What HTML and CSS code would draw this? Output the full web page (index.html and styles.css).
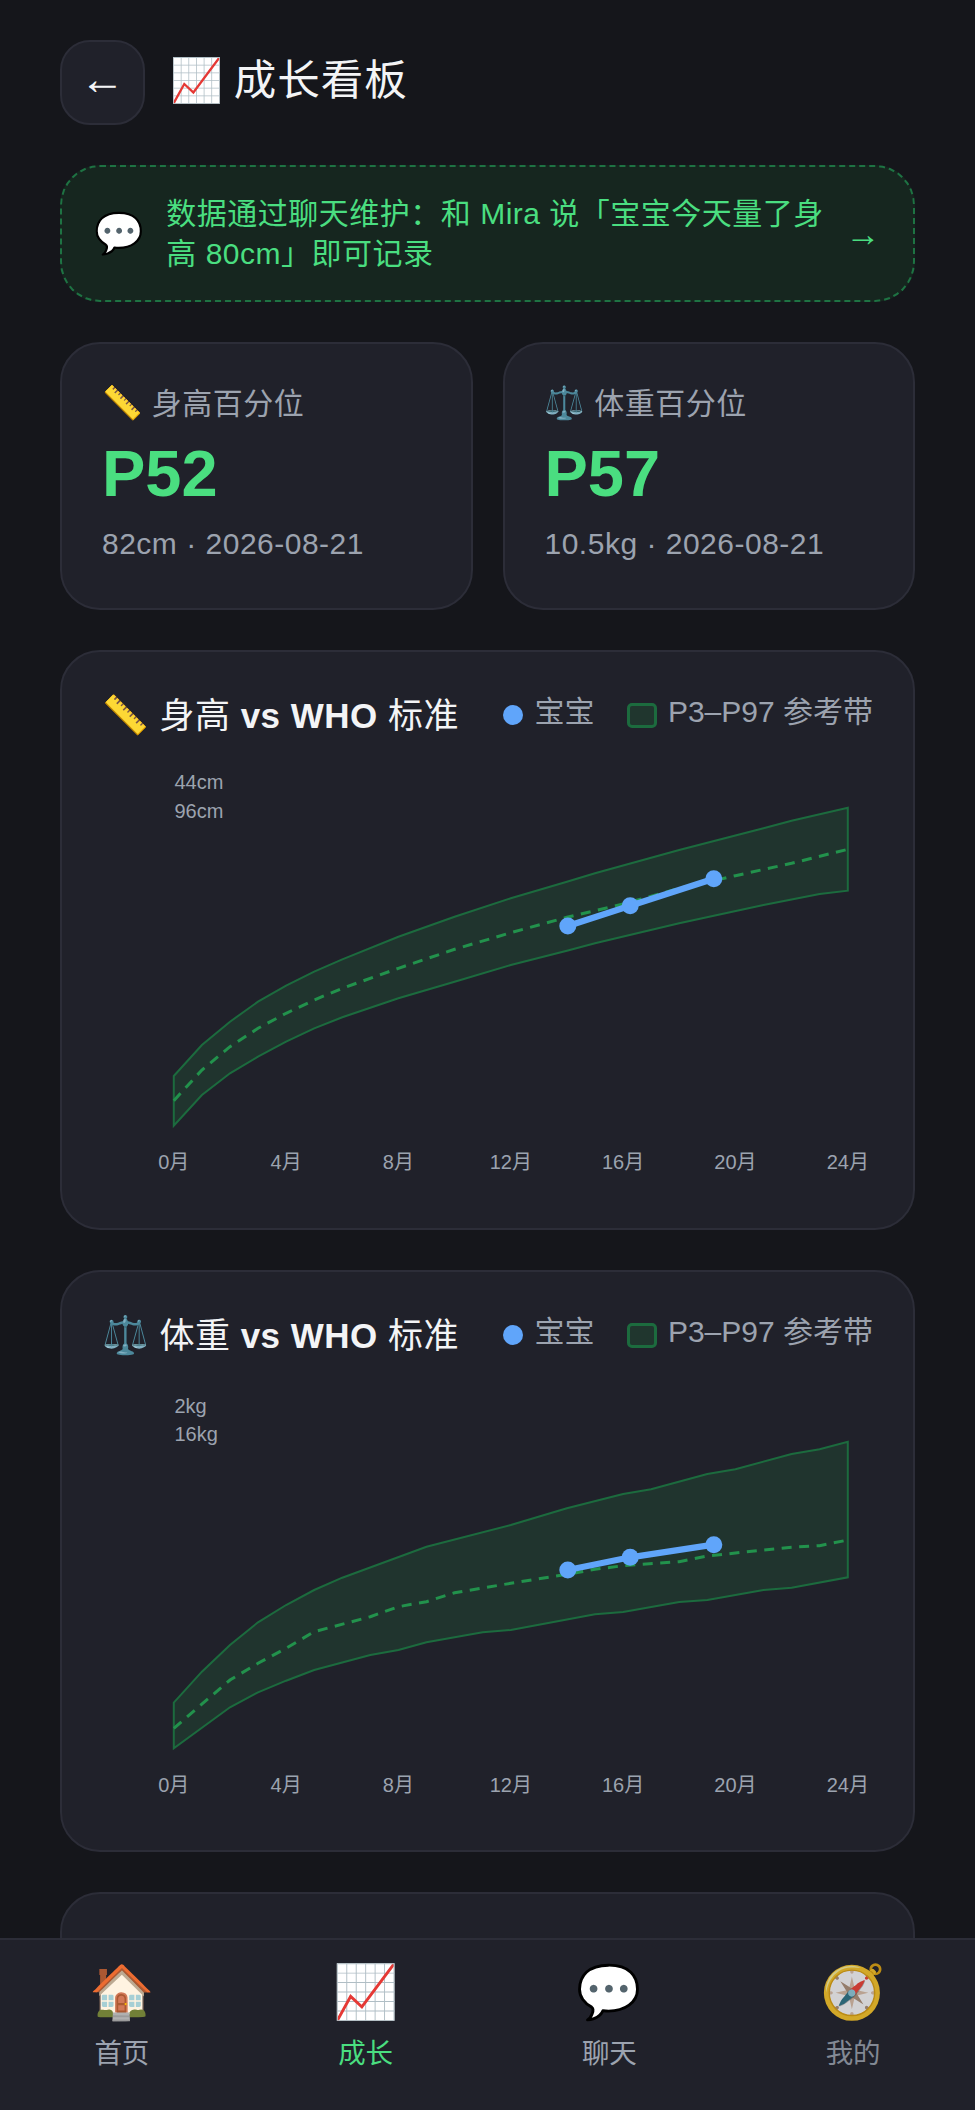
FILE: index.html
```html
<!DOCTYPE html>
<html lang="zh-CN">
<head>
    <meta charset="UTF-8">
    <meta name="viewport" content="width=device-width, initial-scale=1.0">
    <title>成长看板</title>
    <link rel="stylesheet" href="styles.css">
</head>
<body>
    <div class="app">
        <main class="content">
            <header class="page-head">
                <button class="back-btn">←</button>
                <h1 class="page-title"><span class="emoji">📈</span> 成长看板</h1>
            </header>

            <div class="tip">
                <span class="tip-icon emoji">💬</span>
                <p class="tip-text">数据通过聊天维护：和 Mira 说「宝宝今天量了身高 80cm」即可记录</p>
                <span class="tip-arrow">→</span>
            </div>

            <section class="stats">
                <div class="stat-card">
                    <div class="stat-label"><span class="emoji">📏</span> 身高百分位</div>
                    <div class="stat-value">P52</div>
                    <div class="stat-meta">82cm · 2026-08-21</div>
                </div>
                <div class="stat-card">
                    <div class="stat-label"><span class="emoji">⚖️</span> 体重百分位</div>
                    <div class="stat-value">P57</div>
                    <div class="stat-meta">10.5kg · 2026-08-21</div>
                </div>
            </section>

            <section class="chart-card">
                <div class="chart-head">
                    <h2 class="chart-title"><span class="emoji">📏</span> 身高 <b>vs WHO</b> 标准</h2>
                    <div class="legend">
                        <span class="legend-item"><i class="dot"></i>宝宝</span>
                        <span class="legend-item"><i class="swatch"></i>P3–P97 参考带</span>
                    </div>
                </div>
                <svg class="chart" viewBox="0 0 770 427">
                    <text class="tick" x="72.5" y="29">44cm</text>
                    <text class="tick" x="72.5" y="58">96cm</text>
                    <path class="band" d="M71.8 316L99.9 285L128 261.7L156 241.7L184.1 225.7L212.2 211.7L240.3 199.3L296.4 176.7L352.6 156.7L408.8 138.3L464.9 121.7L493 113.3L577.2 90L661.5 68.3L689.6 60.7L745.8 47.7V130.7L717.6 134L661.5 145L577.2 163.3L493 183.3L464.9 190.7L408.8 205L352.6 221.7L296.4 238.3L240.3 257.3L212.2 268.3L184.1 281.7L156 296.7L128 313.3L99.9 335L71.8 365.7Z"/>
                    <path class="median" d="M71.8 340.7L99.9 310L128 286.7L156 268.3L184.1 253.3L212.2 240L240.3 228.3L296.4 208.3L352.6 189.3L408.8 172.7L464.9 157.3L521.1 144L577.2 128.3L633.4 115.7L689.6 103.3L745.8 89.3"/>
                    <path class="baby" d="M465.8 166L528.2 145.7L611.8 118.7"/>
                    <circle class="baby-dot" cx="465.8" cy="166" r="8.5"/>
                    <circle class="baby-dot" cx="528.2" cy="145.7" r="8.5"/>
                    <circle class="baby-dot" cx="611.8" cy="118.7" r="8.5"/>
                    <g class="axis">
                        <text x="71.8" y="409">0月</text>
                        <text x="184.1" y="409">4月</text>
                        <text x="296.4" y="409">8月</text>
                        <text x="408.8" y="409">12月</text>
                        <text x="521.1" y="409">16月</text>
                        <text x="633.4" y="409">20月</text>
                        <text x="745.8" y="409">24月</text>
                    </g>
                </svg>
            </section>

            <section class="chart-card chart-card-tall">
                <div class="chart-head">
                    <h2 class="chart-title"><span class="emoji">⚖️</span> 体重 <b>vs WHO</b> 标准</h2>
                    <div class="legend">
                        <span class="legend-item"><i class="dot"></i>宝宝</span>
                        <span class="legend-item"><i class="swatch"></i>P3–P97 参考带</span>
                    </div>
                </div>
                <svg class="chart" viewBox="0 0 770 427">
                    <text class="tick" x="72.5" y="30">2kg</text>
                    <text class="tick" x="72.5" y="58">16kg</text>
                    <path class="band" d="M71.8 319.7L99.9 288.7L128 262L156 239.3L184.1 222L212.2 207L240.3 194.7L324.5 163.7L408.8 142L464.9 125.3L521.1 111L549.1 106.3L605.3 91L633.4 86.3L689.6 71L717.6 66.3L745.8 58.7V194.3L689.6 204.7L661.5 207L605.3 217L577.2 219L521.1 229L493 231.3L408.8 247L380.7 249.3L324.5 259.3L296.4 267L268.3 272L212.2 287L184.1 297.7L156 309.3L128 324.3L71.8 365.3Z"/>
                    <path class="median" d="M71.8 345.3L128 297L156 280.3L184.1 265.3L212.2 248.7L268.3 233.7L296.4 223.7L324.5 218.7L352.6 209.7L408.8 200.3L464.9 191.3L493 186.3L521.1 182.7L577.2 178.7L605.3 173L661.5 167L689.6 164.3L717.6 162.7L745.8 157"/>
                    <path class="baby" d="M465.8 187L528.2 174.3L611.8 161.7"/>
                    <circle class="baby-dot" cx="465.8" cy="187" r="8.5"/>
                    <circle class="baby-dot" cx="528.2" cy="174.3" r="8.5"/>
                    <circle class="baby-dot" cx="611.8" cy="161.7" r="8.5"/>
                    <g class="axis">
                        <text x="71.8" y="409">0月</text>
                        <text x="184.1" y="409">4月</text>
                        <text x="296.4" y="409">8月</text>
                        <text x="408.8" y="409">12月</text>
                        <text x="521.1" y="409">16月</text>
                        <text x="633.4" y="409">20月</text>
                        <text x="745.8" y="409">24月</text>
                    </g>
                </svg>
            </section>

            <section class="chart-card chart-card-empty"></section>
        </main>

        <nav class="tabbar">
            <a class="tab"><span class="tab-icon emoji">🏠</span><span class="tab-label">首页</span></a>
            <a class="tab tab-active"><span class="tab-icon emoji">📈</span><span class="tab-label">成长</span></a>
            <a class="tab"><span class="tab-icon emoji">💬</span><span class="tab-label">聊天</span></a>
            <a class="tab tab-dim"><span class="tab-icon emoji">🧭</span><span class="tab-label">我的</span></a>
        </nav>
    </div>
</body>
</html>
```

FILE: styles.css
```css
* {
    box-sizing: border-box;
}
body {
    margin: 0;
    background-color: #15161b;
    color: #f3f4f6;
    font-family: "Liberation Sans", "Noto Sans CJK SC", sans-serif;
}
.emoji {
    font-family: "Noto Color Emoji", "Liberation Sans", sans-serif;
    font-weight: 400;
}
.app {
    display: flex;
    flex-direction: column;
    height: 100vh;
    overflow: hidden;
}
.content {
    flex: 1;
    min-height: 0;
    overflow: hidden;
    padding: 40px 60px 0;
    display: flex;
    flex-direction: column;
    gap: 40px;
}
.page-head {
    display: flex;
    align-items: center;
    gap: 25px;
    flex: none;
}
.back-btn {
    width: 85px;
    height: 85px;
    padding: 0 0 8px;
    border-radius: 30px;
    border: 2.5px solid #2c2d38;
    background-color: #20212a;
    color: #f3f4f6;
    font-family: inherit;
    font-size: 45px;
    line-height: 1;
}
.page-title {
    margin: -12px 0 0;
    font-size: 42.5px;
    font-weight: 400;
    letter-spacing: 1px;
    word-spacing: -3px;
}
.tip {
    flex: none;
    display: flex;
    align-items: center;
    gap: 22px;
    height: 137px;
    padding: 0 32.5px;
    border: 2.5px dashed #1e7343;
    border-radius: 40px;
    background-color: #16261f;
    color: #4ade80;
}
.tip-icon {
    font-size: 40px;
}
.tip-text {
    flex: 1;
    margin: 0 -12px 0 0;
    font-size: 30px;
    letter-spacing: 0.5px;
    line-height: 40px;
}
.tip-arrow {
    font-size: 35px;
}
.stats {
    flex: none;
    display: grid;
    grid-template-columns: 1fr 1fr;
    gap: 30px;
}
.stat-card {
    height: 268px;
    padding: 40px 40px 0;
    border: 2.5px solid #2c2d38;
    border-radius: 40px;
    background-color: #20212a;
}
.stat-label {
    font-size: 30px;
    letter-spacing: 0.5px;
    line-height: 39px;
    color: #9ca3af;
}
.stat-label .emoji {
    font-size: 32.5px;
}
.stat-value {
    margin-top: 11.5px;
    font-size: 65px;
    font-weight: 700;
    line-height: 78px;
    color: #4ade80;
}
.stat-meta {
    margin-top: 12px;
    font-size: 30px;
    letter-spacing: 0.5px;
    line-height: 37px;
    color: #9ca3af;
}
.chart-card {
    flex: none;
    height: 580px;
    padding: 40px;
    border: 2.5px solid #2c2d38;
    border-radius: 40px;
    background-color: #20212a;
}
.chart-card-tall {
    height: 582px;
}
.chart-card-empty {
    height: 300px;
}
.chart-head {
    display: flex;
    align-items: center;
    justify-content: space-between;
    height: 41px;
    margin-bottom: 27px;
}
.chart-card-tall .chart-head {
    margin-bottom: 30px;
}
.chart-title {
    margin: 0;
    font-size: 35px;
    font-weight: 400;
    letter-spacing: 0.5px;
    color: #f3f4f6;
}
.chart-title .emoji {
    font-size: 37.5px;
}
.legend {
    display: flex;
    align-items: center;
    gap: 32.5px;
    margin-top: -7px;
    font-size: 30px;
    color: #9ca3af;
}
.legend-item {
    display: flex;
    align-items: center;
    gap: 11px;
}
.dot {
    width: 20px;
    height: 20px;
    margin-top: 12px;
    border-radius: 50%;
    background-color: #60a5fa;
}
.swatch {
    width: 30px;
    height: 25px;
    margin-top: 12px;
    border: 3px solid #1c6b3e;
    border-radius: 5px;
    background-color: #20362e;
}
.chart {
    display: block;
    width: 770px;
    height: 427px;
}
.tick, .axis text {
    font-size: 20px;
    fill: #9ca3af;
}
.axis text {
    text-anchor: middle;
}
.band {
    fill: #20342e;
    stroke: #1c6b3e;
    stroke-width: 2;
}
.median {
    fill: none;
    stroke: #22924c;
    stroke-width: 3;
    stroke-dasharray: 10 7.5;
}
.baby {
    fill: none;
    stroke: #60a5fa;
    stroke-width: 6.25;
}
.baby-dot {
    fill: #60a5fa;
}
.tabbar {
    flex: none;
    display: grid;
    grid-template-columns: repeat(4, 1fr);
    height: 172px;
    border-top: 2.5px solid #2c2d38;
    background-color: #20212a;
}
.tab {
    display: flex;
    flex-direction: column;
    align-items: center;
    padding-top: 18px;
    color: #9ca3af;
}
.tab-active {
    color: #4ade80;
}
.tab-dim {
    opacity: 0.8;
}
.tab-icon {
    font-size: 52.5px;
    line-height: 68px;
}
.tab-label {
    margin-top: 10px;
    font-size: 27.5px;
    line-height: 36px;
}
```
